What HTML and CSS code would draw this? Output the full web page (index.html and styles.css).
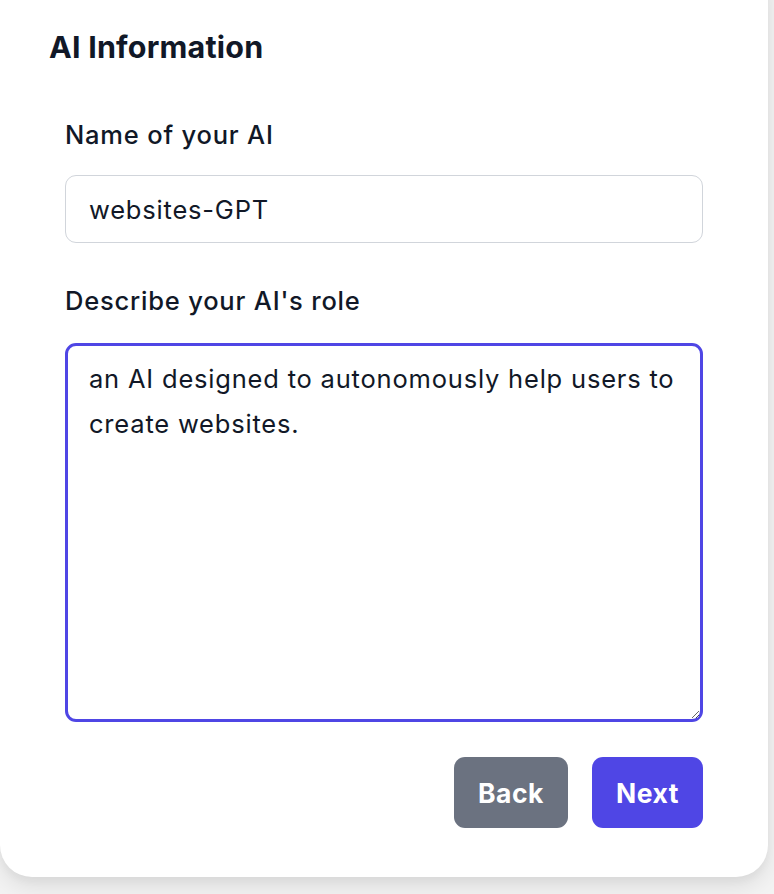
FILE: index.html
```html
<!DOCTYPE html>
<html lang="en">
<head>
<meta charset="utf-8">
<title>AI Information</title>
<link rel="stylesheet" href="styles.css">
</head>
<body>
<div class="card">
  <h2 class="title">AI Information</h2>
  <form class="form">
    <label class="label" for="ai-name">Name of your AI</label>
    <input class="input" id="ai-name" type="text" value="websites-GPT">
    <label class="label label-role" for="ai-role">Describe your AI's role</label>
    <textarea class="textarea" id="ai-role">an AI designed to autonomously help users to create websites.</textarea>
    <div class="actions">
      <button type="button" class="btn btn-back">Back</button>
      <button type="button" class="btn btn-next">Next</button>
    </div>
  </form>
</div>
</body>
</html>
```

FILE: styles.css
```css
html, body {
  margin: 0;
  padding: 0;
}

body {
  background: #f3f3f3;
  width: 774px;
  height: 894px;
  overflow: hidden;
  font-family: Inter, "Noto Sans", "Liberation Sans", sans-serif;
  color: #111827;
}

.card {
  box-sizing: border-box;
  width: 768px;
  margin-top: -40px;
  padding: 69px 49px 49px 49px;
  background: #ffffff;
  border-radius: 32px;
  box-shadow: 0 10px 22px rgba(0, 0, 0, 0.09), 0 4px 8px rgba(0, 0, 0, 0.04);
}

.title {
  margin: 0;
  font-size: 30.5px;
  line-height: 36px;
  font-weight: 700;
  letter-spacing: 0.2px;
  color: #111827;
}

.form {
  display: flex;
  flex-direction: column;
  margin: 51px 16px 0 16px;
}

.label {
  display: block;
  font-size: 25.5px;
  line-height: 37px;
  font-weight: 500;
  letter-spacing: 0.8px;
  color: #111827;
  margin-bottom: 22px;
}

.label-role {
  margin-top: 39px;
  margin-bottom: 24px;
}

.input {
  box-sizing: border-box;
  width: 100%;
  height: 68px;
  padding: 0 23px;
  border: 1.5px solid #d1d5db;
  border-radius: 11px;
  font-family: inherit;
  font-size: 25.5px;
  letter-spacing: 0.8px;
  color: #111827;
  background: #fff;
  outline: none;
}

.textarea {
  box-sizing: border-box;
  width: 100%;
  height: 379px;
  padding: 10px 10px 10px 21px;
  border: 3px solid #4f46e5;
  border-radius: 11px;
  font-family: inherit;
  font-size: 25.5px;
  line-height: 45px;
  letter-spacing: 0.8px;
  color: #111827;
  background: #fff;
  outline: none;
  resize: vertical;
}

.actions {
  display: flex;
  justify-content: flex-end;
  gap: 24px;
  margin-top: 35px;
}

.btn {
  height: 71px;
  border: none;
  border-radius: 11px;
  font-family: inherit;
  font-size: 26.5px;
  font-weight: 700;
  letter-spacing: 0.5px;
  color: #ffffff;
  cursor: pointer;
}

.btn-back {
  width: 114px;
  background: #6b7280;
}

.btn-next {
  width: 111px;
  background: #4f46e5;
}
```
